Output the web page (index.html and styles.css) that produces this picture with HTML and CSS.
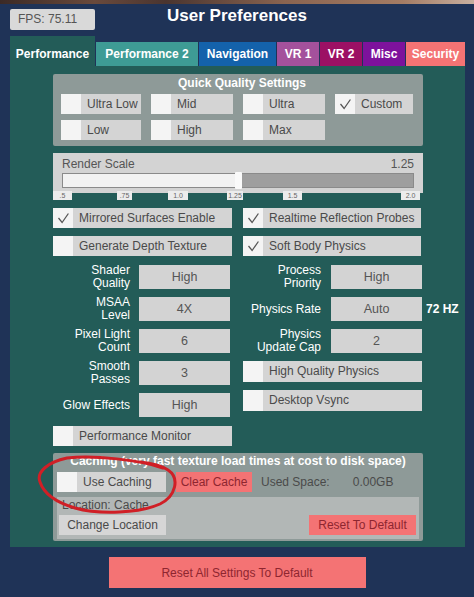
FILE: index.html
```html
<!DOCTYPE html>
<html lang="en">
<head>
    <meta charset="UTF-8">
    <meta name="viewport" content="width=device-width, initial-scale=1.0">
    <title>User Preferences</title>
    <link rel="stylesheet" href="styles.css">
</head>
<body>
    <div class="strip"></div>

    <div class="window">
        <header class="topbar">
            <div class="fps">FPS: 75.11</div>
            <h1>User Preferences</h1>
        </header>

        <nav class="tabs">
            <div class="tab tab-perf active">Performance</div>
            <div class="tab tab-perf2">Performance 2</div>
            <div class="tab tab-nav">Navigation</div>
            <div class="tab tab-vr1">VR 1</div>
            <div class="tab tab-vr2">VR 2</div>
            <div class="tab tab-misc">Misc</div>
            <div class="tab tab-sec">Security</div>
        </nav>

        <main class="panel">
            <section class="box quick">
                <h2>Quick Quality Settings</h2>
                <div class="quick-grid">
                    <div class="toggle"><span class="sq"></span><span class="lbl">Ultra Low</span></div>
                    <div class="toggle"><span class="sq"></span><span class="lbl">Mid</span></div>
                    <div class="toggle"><span class="sq"></span><span class="lbl">Ultra</span></div>
                    <div class="toggle on"><span class="sq"><svg viewBox="0 0 20 20"><polyline points="5,10 9,15 16,5"/></svg></span><span class="lbl">Custom</span></div>
                    <div class="toggle"><span class="sq"></span><span class="lbl">Low</span></div>
                    <div class="toggle"><span class="sq"></span><span class="lbl">High</span></div>
                    <div class="toggle"><span class="sq"></span><span class="lbl">Max</span></div>
                </div>
            </section>

            <section class="scale">
                <div class="scale-head">
                    <span>Render Scale</span>
                    <span>1.25</span>
                </div>
                <div class="track">
                    <div class="fill" style="width: 50%"></div>
                    <div class="handle" style="left: 50%"></div>
                </div>
                <div class="tick" style="left: 0px; width: 19px">.5</div>
                <div class="tick" style="left: 64px; width: 15px">.75</div>
                <div class="tick" style="left: 115px; width: 20px">1.0</div>
                <div class="tick" style="left: 174px; width: 16px">1.25</div>
                <div class="tick" style="left: 230px; width: 19px">1.5</div>
                <div class="tick" style="left: 348px; width: 19px">2.0</div>
            </section>

            <div class="checks">
                <div class="toggle on"><span class="sq"><svg viewBox="0 0 20 20"><polyline points="5,10 9,15 16,5"/></svg></span><span class="lbl">Mirrored Surfaces Enable</span></div>
                <div class="toggle on"><span class="sq"><svg viewBox="0 0 20 20"><polyline points="5,10 9,15 16,5"/></svg></span><span class="lbl">Realtime Reflection Probes</span></div>
                <div class="toggle"><span class="sq"></span><span class="lbl">Generate Depth Texture</span></div>
                <div class="toggle on"><span class="sq"><svg viewBox="0 0 20 20"><polyline points="5,10 9,15 16,5"/></svg></span><span class="lbl">Soft Body Physics</span></div>
            </div>

            <div class="settings">
                <div class="col">
                    <div class="row"><span class="name">Shader<br>Quality</span><span class="drop">High</span></div>
                    <div class="row"><span class="name">MSAA<br>Level</span><span class="drop">4X</span></div>
                    <div class="row"><span class="name">Pixel Light<br>Count</span><span class="drop">6</span></div>
                    <div class="row"><span class="name">Smooth<br>Passes</span><span class="drop">3</span></div>
                    <div class="row"><span class="name">Glow Effects</span><span class="drop">High</span></div>
                </div>
                <div class="col right">
                    <div class="row"><span class="name">Process<br>Priority</span><span class="drop">High</span></div>
                    <div class="row"><span class="name">Physics Rate</span><span class="drop">Auto</span><span class="hz">72 HZ</span></div>
                    <div class="row"><span class="name">Physics<br>Update Cap</span><span class="drop">2</span></div>
                    <div class="toggle tall"><span class="sq"></span><span class="lbl">High Quality Physics</span></div>
                    <div class="toggle tall"><span class="sq"></span><span class="lbl">Desktop Vsync</span></div>
                </div>
            </div>

            <div class="toggle perf-mon"><span class="sq"></span><span class="lbl">Performance Monitor</span></div>

            <section class="box caching">
                <h2>Caching (very fast texture load times at cost to disk space)</h2>
                <div class="cache-row">
                    <div class="toggle use-cache"><span class="sq"></span><span class="lbl">Use Caching</span></div>
                    <button class="btn red clear">Clear Cache</button>
                    <span class="used">Used Space:</span>
                    <span class="size">0.00GB</span>
                </div>
                <div class="location">
                    <div class="loc-text">Location: Cache</div>
                    <div class="loc-buttons">
                        <button class="btn grey">Change Location</button>
                        <button class="btn red">Reset To Default</button>
                    </div>
                </div>
            </section>
        </main>

        <div class="footer">
            <button class="reset-all">Reset All Settings To Default</button>
        </div>
    </div>

    <!-- hand drawn marker around the caching toggle -->
    <svg class="marker" viewBox="0 0 474 597">
        <path d="M 163 468 C 140 460, 95 455, 67 458 C 48 462, 36 472, 40 482 C 44 494, 58 503, 75 508 C 100 515, 140 513, 160 504 C 176 496, 180 478, 168 470 C 162 466, 150 463, 140 462"/>
    </svg>
</body>
</html>
```

FILE: styles.css
```css
* {
    margin: 0;
    padding: 0;
    box-sizing: border-box;
}

body {
    width: 474px;
    height: 597px;
    background-color: #1f3357;
    font-family: 'Liberation Sans', Arial, sans-serif;
    font-size: 12px;
    color: #4a4a4a;
    overflow: hidden;
    position: relative;
}

.strip {
    height: 4px;
    background: linear-gradient(90deg, #3b2a26 0%, #6a4a3c 20%, #4a3530 35%, #8a6450 60%, #a47c64 85%, #c8b0a0 100%);
}

.window {
    background-color: #1f3357;
    height: 593px;
    border-radius: 0 0 6px 6px;
}

/* header */
.topbar {
    height: 32px;
    display: grid;
    grid-template-columns: 1fr auto 1fr;
    align-items: start;
    padding-top: 5px;
}

.fps {
    margin-left: 10px;
    width: 85px;
    height: 21px;
    line-height: 21px;
    background: #d9d9d9;
    color: #555;
    padding-left: 8px;
    border-radius: 2px;
}

h1 {
    color: #fff;
    font-size: 17px;
    font-weight: bold;
    line-height: 22px;
    margin-top: -4px;
}

/* tabs */
.tabs {
    display: flex;
    align-items: flex-end;
    gap: 1px;
    padding-left: 10px;
    height: 30px;
}

.tab {
    height: 24px;
    line-height: 25px;
    color: #fff;
    font-weight: bold;
    font-size: 12px;
    text-align: center;
}

.tab.active {
    height: 30px;
    padding-top: 6px;
}

.tab-perf { width: 85px; background: #235c58; }
.tab-perf2 { width: 102px; background: #3e9b95; }
.tab-nav { width: 77px; background: #1462ab; }
.tab-vr1 { width: 42px; background: #a4519c; }
.tab-vr2 { width: 42px; background: #9c1064; }
.tab-misc { width: 42px; background: #7d129c; }
.tab-sec { width: 59px; background: #f47374; }

/* main panel */
.panel {
    margin: 0 9px 0 10px;
    background: #235c58;
    padding: 8px 42px 6px 43px;
}

.box {
    background: #8e9a98;
    border-radius: 2px;
}

.box h2 {
    color: #fff;
    font-size: 12px;
    font-weight: bold;
    text-align: center;
}

.quick {
    height: 72px;
    padding: 0 0 6px 8px;
}

.quick h2 {
    height: 20px;
    line-height: 19px;
}

.quick-grid {
    display: grid;
    grid-template-columns: 80px 82px 82px 78px;
    grid-auto-rows: 20px;
    gap: 6px 10px;
}

/* toggles */
.toggle {
    display: flex;
    height: 20px;
}

.toggle .sq {
    width: 20px;
    flex: none;
    background: #f4f4f4;
    display: flex;
    align-items: center;
    justify-content: center;
}

.toggle .sq svg {
    width: 18px;
    height: 18px;
}

.toggle .sq polyline {
    fill: none;
    stroke: #555;
    stroke-width: 1.4;
}

.toggle .lbl {
    flex: 1;
    background: #d4d4d4;
    padding-left: 6px;
    line-height: 20px;
    white-space: nowrap;
    overflow: hidden;
}

/* render scale */
.scale {
    position: relative;
    margin-top: 7px;
    height: 40px;
    background: #d3d3d3;
    padding: 4px 9px 0 9px;
}

.scale-head {
    display: flex;
    justify-content: space-between;
    color: #555;
    line-height: 14px;
}

.track {
    position: relative;
    margin-top: 2px;
    height: 15px;
    background: #9e9e9e;
    border: 1px solid #8a8a8a;
}

.fill {
    height: 100%;
    background: #f2f2f2;
}

.handle {
    position: absolute;
    top: -2px;
    width: 7px;
    height: 17px;
    margin-left: -3px;
    background: #fafafa;
    border-radius: 1px;
}

.tick {
    position: absolute;
    top: 38px;
    height: 9px;
    line-height: 9px;
    font-size: 7px;
    text-align: center;
    color: #666;
    background: #ececec;
}

/* checkbox grid */
.checks {
    margin-top: 15px;
    display: grid;
    grid-template-columns: 179px 178px;
    grid-auto-rows: 20px;
    gap: 8px 11px;
}

/* dropdown settings */
.settings {
    margin-top: 9px;
    display: grid;
    grid-template-columns: 179px 179px;
    gap: 11px;
}

.col {
    display: flex;
    flex-direction: column;
    gap: 8px;
}

.row {
    display: flex;
    align-items: center;
    height: 24px;
}

.name {
    width: 77px;
    text-align: right;
    color: #fff;
    font-size: 12px;
    line-height: 13px;
    margin-right: 9px;
    flex: none;
}

.right .name {
    width: 78px;
    margin-right: 10px;
}

.drop {
    width: 91px;
    height: 24px;
    line-height: 24px;
    background: #d3d3d3;
    text-align: center;
    color: #555;
    font-size: 12.5px;
    flex: none;
}

.hz {
    margin-left: 4px;
    color: #fff;
    font-weight: bold;
    white-space: nowrap;
}

.toggle.tall {
    height: 21px;
}

.toggle.tall .lbl {
    line-height: 21px;
}

.perf-mon {
    margin-top: 9px;
    width: 179px;
}

/* caching */
.caching {
    margin-top: 7px;
    height: 88px;
    padding: 0 4px 2px 4px;
}

.caching h2 {
    line-height: 17px;
    height: 19px;
}

.cache-row {
    display: flex;
    align-items: center;
    height: 20px;
}

.use-cache {
    width: 109px;
}

.btn {
    font-family: inherit;
    font-size: 12px;
    border: none;
    height: 20px;
    line-height: 20px;
    width: 107px;
}

.btn.red {
    background: #f47374;
    color: #8e2630;
}

.btn.grey {
    background: #d6d6d6;
    color: #4a4a4a;
}

.clear {
    width: 76px;
    margin-left: 10px;
}

.used {
    margin-left: 9px;
    color: #4a4a4a;
}

.size {
    margin-left: 23px;
    color: #4a4a4a;
}

.location {
    margin-top: 5px;
    height: 42px;
    background: #b2b7b6;
    padding: 0 3px 0 2px;
}

.loc-text {
    line-height: 14px;
    padding-left: 3px;
    padding-top: 1px;
    color: #4a4a4a;
}

.loc-buttons {
    display: flex;
    justify-content: space-between;
    margin-top: 3px;
}

/* footer */
.footer {
    display: flex;
    justify-content: center;
    padding-top: 10px;
}

.reset-all {
    width: 257px;
    height: 31px;
    border: none;
    background: #f47374;
    color: #8e2630;
    font-family: inherit;
    font-size: 12px;
}

.marker {
    position: absolute;
    left: 0;
    top: 0;
    width: 474px;
    height: 597px;
    pointer-events: none;
}

.marker path {
    fill: none;
    stroke: #d01f26;
    stroke-width: 3;
    stroke-linecap: round;
}
```
